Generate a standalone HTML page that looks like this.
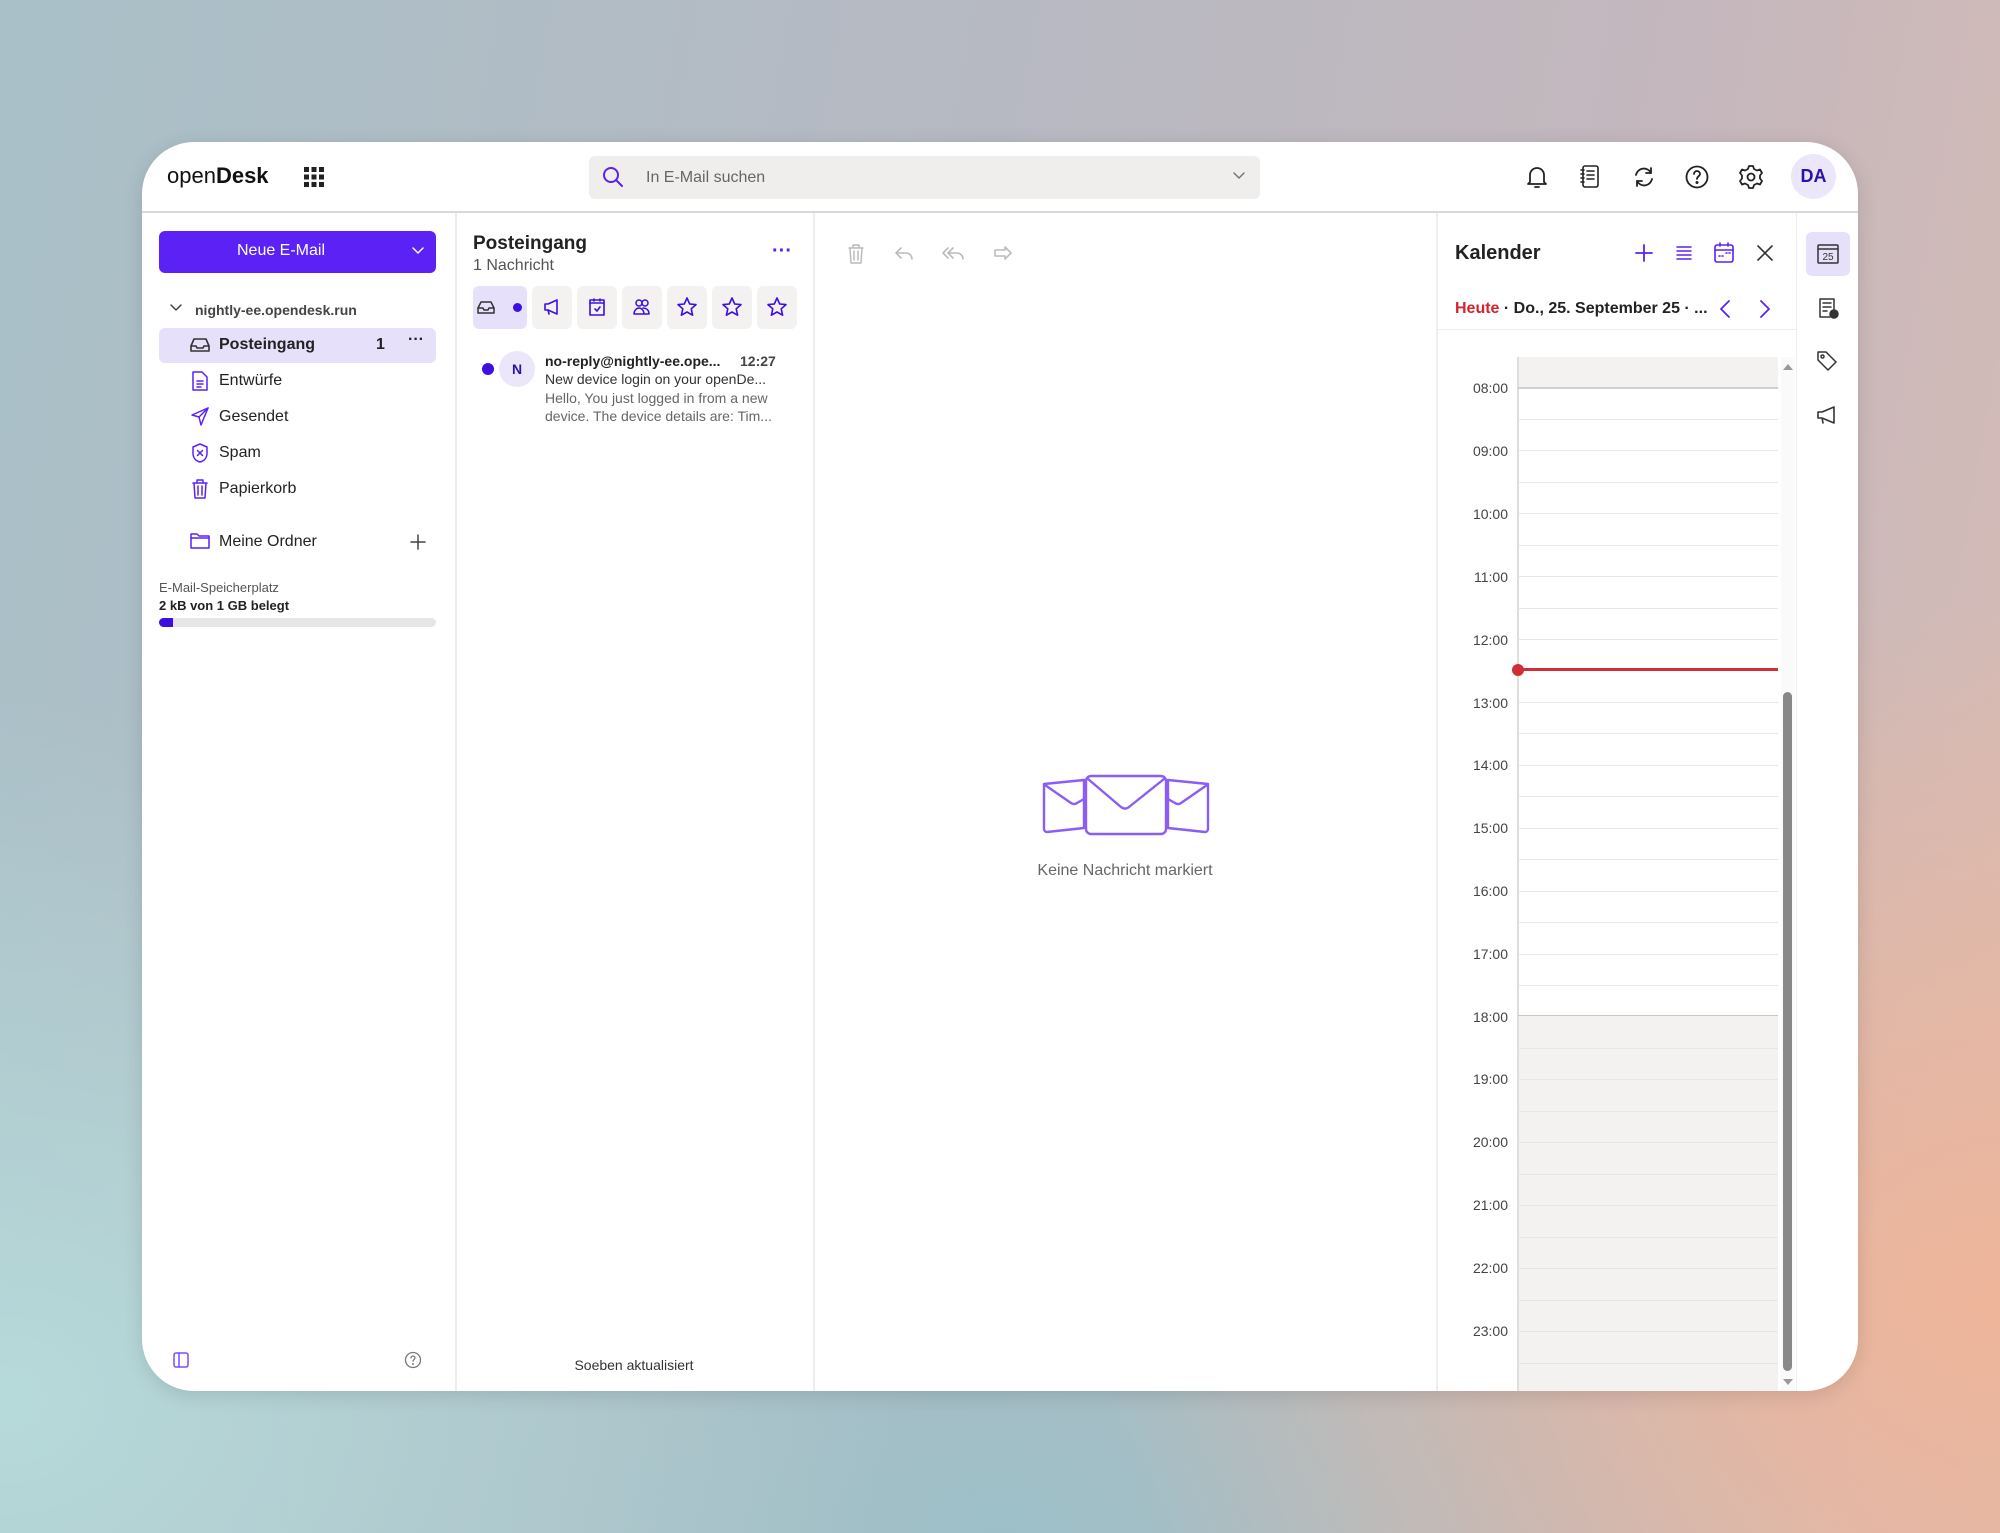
<!DOCTYPE html>
<html><head><meta charset="utf-8"><style>
*{box-sizing:border-box;margin:0;padding:0}
body{width:2000px;height:1533px;overflow:hidden;font-family:"Liberation Sans",sans-serif;position:relative;
background:
radial-gradient(ellipse 900px 700px at 2000px 1300px,#eeb59a 0%,rgba(238,181,154,0) 100%),
radial-gradient(ellipse 900px 700px at 0px 1400px,#b6dada 0%,rgba(182,218,218,0) 100%),
radial-gradient(ellipse 900px 600px at 1000px 1533px,#9dc0c8 0%,rgba(157,192,200,0) 100%),
linear-gradient(100deg,#a9c0c8 0%,#b7b9c2 45%,#c4b7bd 75%,#d8bcb4 100%);}
.win{position:absolute;left:142px;top:142px;width:1716px;height:1249px;background:#fff;border-radius:52px;overflow:hidden;box-shadow:0 4px 20px rgba(0,0,0,.12)}
.a{position:absolute}
svg{position:absolute;fill:none;stroke-linecap:round;stroke-linejoin:round}
.t{position:absolute;white-space:nowrap;color:#222}
.hr{position:absolute;left:1518px;width:260px;height:1px;background:#e6e6e6}
.hl{position:absolute;left:1460px;width:48px;text-align:right;font-size:14px;color:#444}
</style></head><body>
<div class="win"></div>
<!-- header -->
<div class="a" style="left:142px;top:211px;width:1716px;height:2px;background:#d6d8dc"></div>
<div class="t" style="left:167px;top:163px;font-size:22px;color:#111">open<b>Desk</b></div>
<svg style="left:303px;top:166px" width="22" height="22" viewBox="0 0 22 22"><g fill="#222" stroke="none"><rect x="1" y="1" width="5" height="5"/><rect x="8.5" y="1" width="5" height="5"/><rect x="16" y="1" width="5" height="5"/><rect x="1" y="8.5" width="5" height="5"/><rect x="8.5" y="8.5" width="5" height="5"/><rect x="16" y="8.5" width="5" height="5"/><rect x="1" y="16" width="5" height="5"/><rect x="8.5" y="16" width="5" height="5"/><rect x="16" y="16" width="5" height="5"/></g></svg>
<div class="a" style="left:589px;top:156px;width:671px;height:43px;background:#efeeed;border-radius:6px"></div>
<svg style="left:601px;top:165px" width="24" height="24" viewBox="0 0 24 24" stroke="#5b21f5" stroke-width="2"><circle cx="10" cy="10" r="7"/><path d="M15 15l6 6"/></svg>
<div class="t" style="left:646px;top:169px;font-size:16px;color:#666">In E-Mail suchen</div>
<svg style="left:1232px;top:171px" width="14" height="10" viewBox="0 0 14 10" stroke="#777" stroke-width="1.5"><path d="M2 2l5 5 5-5"/></svg>
<svg style="left:1525px;top:164px" width="24" height="26" viewBox="0 0 24 26" stroke="#222" stroke-width="1.8"><path d="M5 18V11a7 7 0 0114 0v7l2 2H3z"/><path d="M10 23h4"/></svg>
<svg style="left:1578px;top:164px" width="24" height="26" viewBox="0 0 24 26" stroke="#222" stroke-width="1.6"><rect x="5" y="2" width="15" height="21" rx="2"/><path d="M3 6h3M3 10h3M3 14h3M3 18h3M9 7h7M9 11h7M9 15h7"/></svg>
<svg style="left:1631px;top:164px" width="26" height="26" viewBox="0 0 26 26" stroke="#222" stroke-width="1.8"><path d="M5 11a8 8 0 0115-2M21 15a8 8 0 01-15 2"/><path d="M20 4v5h-5M6 22v-5h5"/></svg>
<svg style="left:1684px;top:164px" width="26" height="26" viewBox="0 0 26 26" stroke="#222" stroke-width="1.8"><circle cx="13" cy="13" r="10.5"/><path d="M10 10a3 3 0 116 0c0 2-3 2.5-3 5"/><circle cx="13" cy="18.5" r=".6" fill="#222"/></svg>
<svg style="left:1738px;top:164px" width="26" height="26" viewBox="0 0 26 26" stroke="#222" stroke-width="1.8"><circle cx="13" cy="13" r="3.5"/><path d="M11 2h4l1 3 3 1.5 3-1 2 3.5-2 2.5v3l2 2.5-2 3.5-3-1-3 1.5-1 3h-4l-1-3-3-1.5-3 1-2-3.5 2-2.5v-3l-2-2.5 2-3.5 3 1 3-1.5z"/></svg>
<div class="a" style="left:1791px;top:154px;width:45px;height:45px;border-radius:50%;background:#ece6fb"></div>
<div class="t" style="left:1791px;top:166px;width:45px;text-align:center;font-size:18px;font-weight:bold;color:#2a14a8">DA</div>
<!-- sidebar -->
<div class="a" style="left:455px;top:213px;width:2px;height:1178px;background:#eeeeee"></div>
<div class="a" style="left:159px;top:231px;width:277px;height:42px;background:#5b21f5;border-radius:6px"></div>
<div class="t" style="left:159px;top:242px;width:244px;text-align:center;color:#fff;font-size:16px">Neue E-Mail</div>
<svg style="left:411px;top:246px" width="14" height="10" viewBox="0 0 14 10" stroke="#fff" stroke-width="1.5"><path d="M2 2l5 5 5-5"/></svg>
<svg style="left:169px;top:303px" width="14" height="10" viewBox="0 0 14 10" stroke="#444" stroke-width="1.5"><path d="M2 2l5 5 5-5"/></svg>
<div class="t" style="left:195px;top:302px;font-size:14px;font-weight:bold;color:#444">nightly-ee.opendesk.run</div>
<div class="a" style="left:159px;top:328px;width:277px;height:35px;background:#e7e0fb;border-radius:6px"></div>
<svg style="left:189px;top:336px" width="22" height="18" viewBox="0 0 22 18" stroke="#333" stroke-width="1.6"><path d="M2 10l3-7h12l3 7v5H2z"/><path d="M2 10h5l1 2h6l1-2h5"/></svg>
<div class="t" style="left:219px;top:336px;font-size:16px;font-weight:bold">Posteingang</div>
<div class="t" style="left:376px;top:336px;font-size:16px;font-weight:bold">1</div>
<div class="t" style="left:408px;top:331px;font-size:16px;font-weight:bold">···</div>
<svg style="left:190px;top:370px" width="20" height="22" viewBox="0 0 20 22" stroke="#5b21f5" stroke-width="1.5"><path d="M3 2h9l5 5v13H3z"/><path d="M7 11h6M7 14h6M7 17h4"/></svg>
<div class="t" style="left:219px;top:372px;font-size:16px">Entwürfe</div>
<svg style="left:190px;top:406px" width="20" height="22" viewBox="0 0 20 22" stroke="#5b21f5" stroke-width="1.5"><path d="M18 2L2 9l7 2 2 8z"/><path d="M9 11l9-9"/></svg>
<div class="t" style="left:219px;top:408px;font-size:16px">Gesendet</div>
<svg style="left:190px;top:442px" width="20" height="22" viewBox="0 0 20 22" stroke="#5b21f5" stroke-width="1.5"><path d="M10 2l7 3v6c0 5-3 8-7 9-4-1-7-4-7-9V5z"/><path d="M7.5 8.5l5 5M12.5 8.5l-5 5"/></svg>
<div class="t" style="left:219px;top:444px;font-size:16px">Spam</div>
<svg style="left:190px;top:478px" width="20" height="22" viewBox="0 0 20 22" stroke="#5b21f5" stroke-width="1.5"><path d="M3 5h14M7 5V2h6v3M4 5l1 15h10l1-15M8 8v9M12 8v9"/></svg>
<div class="t" style="left:219px;top:480px;font-size:16px">Papierkorb</div>
<svg style="left:189px;top:531px" width="22" height="20" viewBox="0 0 22 20" stroke="#5b21f5" stroke-width="1.5"><path d="M2 3h6l2 2h10v12H2z"/><path d="M2 7h18"/></svg>
<div class="t" style="left:219px;top:533px;font-size:16px">Meine Ordner</div>
<svg style="left:409px;top:533px" width="18" height="18" viewBox="0 0 18 18" stroke="#444" stroke-width="1.5"><path d="M9 2v14M2 9h14"/></svg>
<div class="t" style="left:159px;top:580px;font-size:13px;color:#555">E-Mail-Speicherplatz</div>
<div class="t" style="left:159px;top:598px;font-size:13px;font-weight:bold;color:#222">2 kB von 1 GB belegt</div>
<div class="a" style="left:159px;top:618px;width:277px;height:9px;background:#e8e6e4;border-radius:5px"></div>
<div class="a" style="left:159px;top:618px;width:14px;height:9px;background:#3d0fe0;border-radius:5px 0 0 5px"></div>
<svg style="left:172px;top:1351px" width="18" height="18" viewBox="0 0 18 18" stroke="#7c4dff" stroke-width="1.5"><rect x="2" y="2" width="14" height="14" rx="2"/><path d="M7 2v14"/></svg>
<svg style="left:404px;top:1351px" width="18" height="18" viewBox="0 0 18 18" stroke="#777" stroke-width="1.3"><circle cx="9" cy="9" r="7.5"/><path d="M7 7a2 2 0 114 0c0 1.3-2 1.5-2 3.2"/><circle cx="9" cy="13" r=".4"/></svg>
<!-- mail list -->
<div class="a" style="left:813px;top:213px;width:2px;height:1178px;background:#eeeeee"></div>
<div class="t" style="left:473px;top:233px;font-size:19px;font-weight:bold">Posteingang</div>
<div class="t" style="left:473px;top:257px;font-size:16px;color:#555">1 Nachricht</div>
<div class="t" style="left:772px;top:240px;font-size:20px;font-weight:bold;color:#5b21f5">···</div>
<div class="a" style="left:473px;top:286px;width:54px;height:43px;background:#e7e0fb;border-radius:6px"></div>
<svg style="left:476px;top:299px" width="20" height="16" viewBox="0 0 20 16" stroke="#333" stroke-width="1.5"><path d="M2 9l3-6h10l3 6v5H2z"/><path d="M2 9h5l1 2h4l1-2h5"/></svg>
<div class="a" style="left:513px;top:303px;width:9px;height:9px;border-radius:50%;background:#3d0fe0"></div>
<div class="a" style="left:532px;top:286px;width:40px;height:43px;background:#f3f2f1;border-radius:6px"></div>
<div class="a" style="left:577px;top:286px;width:40px;height:43px;background:#f3f2f1;border-radius:6px"></div>
<div class="a" style="left:622px;top:286px;width:40px;height:43px;background:#f3f2f1;border-radius:6px"></div>
<div class="a" style="left:667px;top:286px;width:40px;height:43px;background:#f3f2f1;border-radius:6px"></div>
<div class="a" style="left:712px;top:286px;width:40px;height:43px;background:#f3f2f1;border-radius:6px"></div>
<div class="a" style="left:757px;top:286px;width:40px;height:43px;background:#f3f2f1;border-radius:6px"></div>
<svg style="left:542px;top:297px" width="20" height="20" viewBox="0 0 20 20" stroke="#3d0fe0" stroke-width="1.6"><path d="M3 7h3l9-4v14l-9-4H3zM6 13l1 4"/></svg>
<svg style="left:587px;top:297px" width="20" height="20" viewBox="0 0 20 20" stroke="#3d0fe0" stroke-width="1.6"><rect x="3" y="3" width="14" height="15"/><path d="M3 6h14M7 2v2M13 2v2M8 12l2 2 3-4"/></svg>
<svg style="left:632px;top:297px" width="20" height="20" viewBox="0 0 20 20" stroke="#3d0fe0" stroke-width="1.5"><circle cx="7" cy="6" r="3"/><circle cx="13" cy="6" r="3"/><path d="M2 17c0-4 3-6 5-6s5 2 5 6zM11 11c2 0 6 1 6 6h-4"/></svg>
<svg style="left:676px;top:296px" width="22" height="22" viewBox="0 0 22 22" stroke="#3d0fe0" stroke-width="1.6"><path d="M11 2l2.7 6 6.3.6-4.8 4.2 1.4 6.4L11 16l-5.6 3.2 1.4-6.4L2 8.6 8.3 8z"/></svg>
<svg style="left:721px;top:296px" width="22" height="22" viewBox="0 0 22 22" stroke="#3d0fe0" stroke-width="1.6"><path d="M11 2l2.7 6 6.3.6-4.8 4.2 1.4 6.4L11 16l-5.6 3.2 1.4-6.4L2 8.6 8.3 8z"/></svg>
<svg style="left:766px;top:296px" width="22" height="22" viewBox="0 0 22 22" stroke="#3d0fe0" stroke-width="1.6"><path d="M11 2l2.7 6 6.3.6-4.8 4.2 1.4 6.4L11 16l-5.6 3.2 1.4-6.4L2 8.6 8.3 8z"/></svg>
<div class="a" style="left:482px;top:363px;width:12px;height:12px;border-radius:50%;background:#3d0fe0"></div>
<div class="a" style="left:499px;top:351px;width:36px;height:36px;border-radius:50%;background:#ece6fb"></div>
<div class="t" style="left:499px;top:361px;width:36px;text-align:center;font-size:14px;font-weight:bold;color:#2a14a8">N</div>
<div class="t" style="left:545px;top:353px;font-size:14px;font-weight:bold">no-reply@nightly-ee.ope...</div>
<div class="t" style="left:740px;top:353px;font-size:14px;font-weight:bold;color:#444">12:27</div>
<div class="t" style="left:545px;top:371px;font-size:14px;color:#333">New device login on your openDe...</div>
<div class="t" style="left:545px;top:390px;font-size:14px;color:#666">Hello, You just logged in from a new</div>
<div class="t" style="left:545px;top:408px;font-size:14px;color:#666">device. The device details are: Tim...</div>
<div class="t" style="left:455px;top:1357px;width:358px;text-align:center;font-size:14px;color:#333">Soeben aktualisiert</div>
<!-- reading pane -->
<svg style="left:846px;top:243px" width="20" height="22" viewBox="0 0 20 22" stroke="#bbb" stroke-width="1.5"><path d="M3 5h14M7 5V2h6v3M4 5l1 15h10l1-15M8 8v9M12 8v9"/></svg>
<svg style="left:893px;top:244px" width="22" height="20" viewBox="0 0 22 20" stroke="#bbb" stroke-width="1.6"><path d="M8 4L3 9l5 5M3 9h10a6 6 0 016 6"/></svg>
<svg style="left:940px;top:244px" width="26" height="20" viewBox="0 0 26 20" stroke="#bbb" stroke-width="1.6"><path d="M8 4L3 9l5 5M13 4L8 9l5 5M8 9h9a6 6 0 016 6"/></svg>
<svg style="left:991px;top:244px" width="24" height="20" viewBox="0 0 24 20" stroke="#bbb" stroke-width="1.6"><path d="M14 3l6 6-6 6v-3H4V6h10z"/></svg>
<svg style="left:1040px;top:773px" width="172" height="64" viewBox="0 0 172 64" stroke="#8b5cf6" stroke-width="2.4"><path d="M4 11l40-4v48l-37 4a3 3 0 01-3-3z"/><path d="M5 12l26 18a5 5 0 006 0l7-4"/><path d="M168 11l-40-4v48l37 4a3 3 0 003-3z"/><path d="M167 12l-26 18a5 5 0 01-6 0l-7-4"/><rect x="46" y="3" width="80" height="58" rx="5" fill="#fff"/><path d="M48 6l33 28a6 6 0 008 0l35-28"/></svg>
<div class="t" style="left:1000px;top:862px;width:250px;text-align:center;font-size:16px;color:#666">Keine Nachricht markiert</div>
<!-- calendar -->
<div class="a" style="left:1436px;top:213px;width:2px;height:1178px;background:#eeeeee"></div>
<div class="a" style="left:1796px;top:213px;width:1px;height:1178px;background:#eeeeee"></div>
<div class="t" style="left:1455px;top:242px;font-size:20px;font-weight:bold">Kalender</div>
<svg style="left:1634px;top:243px" width="20" height="20" viewBox="0 0 20 20" stroke="#5b21f5" stroke-width="1.8"><path d="M10 2v16M2 10h16"/></svg>
<svg style="left:1675px;top:244px" width="18" height="18" viewBox="0 0 18 18" stroke="#5b21f5" stroke-width="1.5"><path d="M2 3h14M2 7h14M2 11h14M2 15h14"/></svg>
<svg style="left:1713px;top:242px" width="22" height="22" viewBox="0 0 22 22" stroke="#5b21f5" stroke-width="1.6"><rect x="2" y="3" width="18" height="17" rx="2"/><path d="M2 8h18M7 1v3M15 1v3M6 14h1M9 14h1M13 11h1M16 11h1"/></svg>
<svg style="left:1756px;top:244px" width="18" height="18" viewBox="0 0 18 18" stroke="#333" stroke-width="1.6"><path d="M2 2l14 14M16 2L2 16"/></svg>
<div class="t" style="left:1455px;top:300px;font-size:16px;font-weight:bold"><span style="color:#d5232f">Heute</span> · Do., 25. September 25 · ...</div>
<svg style="left:1718px;top:298px" width="14" height="22" viewBox="0 0 14 22" stroke="#5b21f5" stroke-width="1.8"><path d="M11 3L3 11l8 8"/></svg>
<svg style="left:1758px;top:298px" width="14" height="22" viewBox="0 0 14 22" stroke="#5b21f5" stroke-width="1.8"><path d="M3 3l8 8-8 8"/></svg>
<div class="a" style="left:1436px;top:329px;width:360px;height:1px;background:#eeeeee"></div>
<div class="a" style="left:1518px;top:357px;width:260px;height:31px;background:#f3f2f1"></div>
<div class="a" style="left:1518px;top:1015px;width:260px;height:376px;background:#f3f2f1"></div>
<div class="a" style="left:1517px;top:357px;width:2px;height:1034px;background:#e0deda"></div>
<div class="a" style="left:1781px;top:357px;width:14px;height:1034px;background:#fafafa"></div>
<svg style="left:1781px;top:362px" width="14" height="10" viewBox="0 0 14 10" stroke="none"><path d="M2 8l5-6 5 6z" fill="#999"/></svg>
<svg style="left:1781px;top:1377px" width="14" height="10" viewBox="0 0 14 10" stroke="none"><path d="M2 2l5 6 5-6z" fill="#999"/></svg>
<div class="a" style="left:1783px;top:692px;width:9px;height:679px;background:#888;border-radius:5px"></div>
<div class="hr" style="top:387px;background:#cfcfcf;height:2px"></div>
<div class="hr" style="top:419px"></div><div class="hr" style="top:450px"></div><div class="hr" style="top:482px"></div><div class="hr" style="top:513px"></div><div class="hr" style="top:545px"></div><div class="hr" style="top:576px"></div><div class="hr" style="top:608px"></div><div class="hr" style="top:639px"></div><div class="hr" style="top:702px"></div><div class="hr" style="top:733px"></div><div class="hr" style="top:765px"></div><div class="hr" style="top:796px"></div><div class="hr" style="top:828px"></div><div class="hr" style="top:859px"></div><div class="hr" style="top:891px"></div><div class="hr" style="top:922px"></div><div class="hr" style="top:954px"></div><div class="hr" style="top:985px"></div>
<div class="hr" style="top:1015px;background:#c8c8c8"></div>
<div class="hr" style="top:1048px"></div><div class="hr" style="top:1079px"></div><div class="hr" style="top:1111px"></div><div class="hr" style="top:1142px"></div><div class="hr" style="top:1174px"></div><div class="hr" style="top:1205px"></div><div class="hr" style="top:1237px"></div><div class="hr" style="top:1268px"></div><div class="hr" style="top:1300px"></div><div class="hr" style="top:1331px"></div><div class="hr" style="top:1363px"></div>
<div class="a" style="left:1518px;top:668px;width:260px;height:3px;background:#d12d37"></div>
<div class="a" style="left:1512px;top:664px;width:12px;height:12px;border-radius:50%;background:#d12d37"></div>
<div class="hl" style="top:380px">08:00</div><div class="hl" style="top:443px">09:00</div><div class="hl" style="top:506px">10:00</div><div class="hl" style="top:569px">11:00</div><div class="hl" style="top:632px">12:00</div><div class="hl" style="top:695px">13:00</div><div class="hl" style="top:757px">14:00</div><div class="hl" style="top:820px">15:00</div><div class="hl" style="top:883px">16:00</div><div class="hl" style="top:946px">17:00</div><div class="hl" style="top:1009px">18:00</div><div class="hl" style="top:1071px">19:00</div><div class="hl" style="top:1134px">20:00</div><div class="hl" style="top:1197px">21:00</div><div class="hl" style="top:1260px">22:00</div><div class="hl" style="top:1323px">23:00</div>
<!-- right rail -->
<div class="a" style="left:1806px;top:232px;width:44px;height:44px;background:#e7e0fb;border-radius:6px"></div>
<svg style="left:1816px;top:242px" width="24" height="24" viewBox="0 0 24 24" stroke="#333" stroke-width="1.5"><rect x="2" y="3" width="20" height="18" rx="1"/><path d="M2 7h20"/></svg>
<div class="t" style="left:1816px;top:252px;width:24px;text-align:center;font-size:10px;color:#333">25</div>
<svg style="left:1816px;top:296px" width="24" height="24" viewBox="0 0 24 24" stroke="#333" stroke-width="1.5"><path d="M14 21H4V3h14v10M7 7h8M7 11h8M7 15h4"/><circle cx="18" cy="18" r="4" fill="#333"/></svg>
<svg style="left:1815px;top:349px" width="24" height="24" viewBox="0 0 24 24" stroke="#333" stroke-width="1.5"><path d="M3 3h8l10 10-8 8L3 11z"/><circle cx="7.5" cy="7.5" r="1.5"/></svg>
<svg style="left:1815px;top:403px" width="24" height="24" viewBox="0 0 24 24" stroke="#333" stroke-width="1.6"><path d="M3 9h4l12-5v16L7 15H3zM7 15l1 5"/></svg>
</body></html>
